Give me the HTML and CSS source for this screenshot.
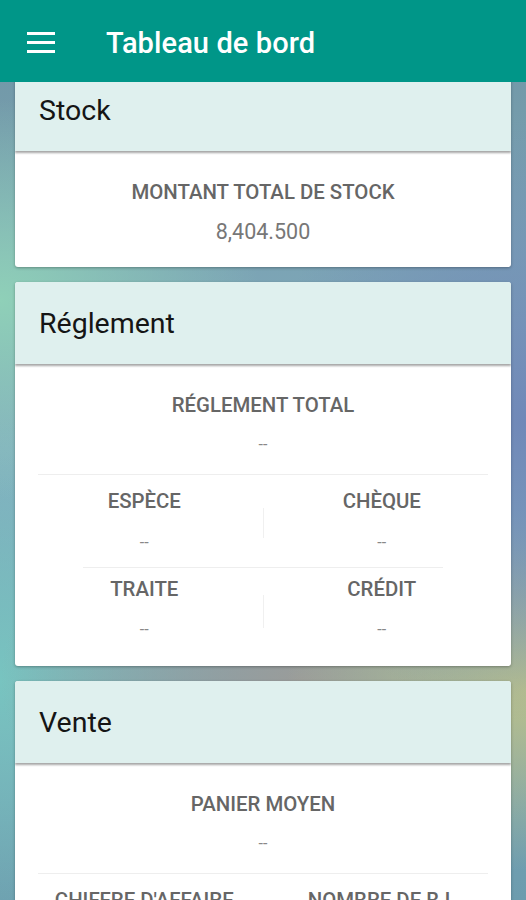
FILE: index.html
```html
<!DOCTYPE html>
<html>
<head>
  <title>Tableau de bord</title>
  <meta name="viewport" content="width=device-width, initial-scale=1.0">
  <link rel="stylesheet" href="styles.css">
</head>
<body>
  <div class="appbar">
    <svg class="menu-icon" width="28" height="22" viewBox="0 0 28 22">
      <rect x="0" y="1" width="28" height="3" fill="#fff"/>
      <rect x="0" y="10" width="28" height="3" fill="#fff"/>
      <rect x="0" y="19" width="28" height="3" fill="#fff"/>
    </svg>
    <h1 class="appbar-title">Tableau de bord</h1>
  </div>

  <div class="content">
    <div class="card">
      <div class="card-header">Stock</div>
      <div class="card-body card-body-short">
        <div class="stat-label">Montant total de stock</div>
        <div class="stat-value">8,404.500</div>
      </div>
    </div>

    <div class="card">
      <div class="card-header">Réglement</div>
      <div class="card-body">
        <div class="stat-label">Réglement total</div>
        <div class="stat-value dash">--</div>
        <div class="divider"></div>
        <div class="grid">
          <div class="cell">
            <div class="stat-label">Espèce</div>
            <div class="stat-value dash">--</div>
          </div>
          <div class="vline"></div>
          <div class="cell">
            <div class="stat-label">Chèque</div>
            <div class="stat-value dash">--</div>
          </div>
        </div>
        <div class="divider divider-inner"></div>
        <div class="grid grid-second">
          <div class="cell">
            <div class="stat-label">Traite</div>
            <div class="stat-value dash">--</div>
          </div>
          <div class="vline"></div>
          <div class="cell">
            <div class="stat-label">Crédit</div>
            <div class="stat-value dash">--</div>
          </div>
        </div>
      </div>
    </div>

    <div class="card">
      <div class="card-header">Vente</div>
      <div class="card-body">
        <div class="stat-label">Panier moyen</div>
        <div class="stat-value dash">--</div>
        <div class="divider"></div>
        <div class="grid">
          <div class="cell">
            <div class="stat-label">Chiffre d'affaire</div>
            <div class="stat-value dash">--</div>
          </div>
          <div class="vline"></div>
          <div class="cell">
            <div class="stat-label">Nombre de B.L</div>
            <div class="stat-value dash">--</div>
          </div>
        </div>
      </div>
    </div>
  </div>
</body>
</html>
```

FILE: styles.css
```css
    html, body {
      margin: 0;
      height: 100%;
      overflow: hidden;
    }
    body {
      font-family: Roboto, "Liberation Sans", sans-serif;
      background-color: #7fa8b4;
      background-image:
        radial-gradient(ellipse 260px 200px at 0px 300px, #8fd0b8 0%, rgba(143,208,184,0) 100%),
        radial-gradient(ellipse 260px 300px at 526px 420px, #7088b8 0%, rgba(112,136,184,0) 100%),
        radial-gradient(ellipse 240px 180px at 526px 690px, #b8c08c 0%, rgba(184,192,140,0) 100%),
        radial-gradient(ellipse 300px 200px at 300px 680px, #9a9c9a 0%, rgba(154,156,154,0) 100%),
        radial-gradient(ellipse 240px 260px at 0px 680px, #78c4c0 0%, rgba(120,196,192,0) 100%),
        linear-gradient(180deg, #6f95a4 0%, #84aec0 50%, #6d9cae 100%);
    }
    .appbar {
      position: fixed;
      top: 0;
      left: 0;
      right: 0;
      z-index: 10;
      height: 82px;
      background-color: #009688;
      display: flex;
      align-items: center;
      padding-left: 27px;
    }
    .menu-icon {
      display: block;
      margin-top: 1px;
    }
    .appbar-title {
      margin: 3px 0 0 51px;
      color: #fff;
      font-size: 29px;
      font-weight: 500;
      letter-spacing: 0.1px;
    }
    .content {
      padding: 69px 15px 0;
      display: flex;
      flex-direction: column;
      gap: 15px;
    }
    .card {
      background-color: #fff;
      border-radius: 3px;
      box-shadow: 0 1px 3px rgba(0, 0, 0, 0.3);
      overflow: hidden;
      flex-shrink: 0;
    }
    .card-header {
      height: 82px;
      box-sizing: border-box;
      background-color: #dff0ee;
      padding: 24px 24px 0;
      font-size: 28.5px;
      line-height: 36px;
      color: #151515;
      box-shadow: 0 2px 2px rgba(0, 0, 0, 0.35);
      position: relative;
    }
    .card-body {
      padding: 29px 0 24px;
      text-align: center;
    }
    .card-body-short {
      padding-bottom: 23px;
    }
    .stat-label {
      font-size: 20.4px;
      line-height: 24px;
      font-weight: 500;
      color: #666;
      text-transform: uppercase;
    }
    .stat-value {
      margin-top: 16px;
      font-size: 21.5px;
      line-height: 24px;
      color: #777;
    }
    .dash {
      font-size: 16px;
      color: #888;
    }
    .divider {
      height: 1px;
      background-color: #eeeeee;
      margin: 17px 23px 0;
    }
    .divider-inner {
      margin: 12px 68px 0;
    }
    .grid {
      display: grid;
      grid-template-columns: 1fr 1px 1fr;
      padding: 14px 11px 0;
    }
    .grid-second {
      padding-top: 9px;
    }
    .grid .stat-value {
      margin-top: 18px;
    }
    .grid-second .stat-value {
      margin-top: 17px;
    }
    .vline {
      background-color: #f0f0f0;
      margin: 19px 0 17px;
    }
    .grid-second .vline {
      margin: 18px 0 14px;
    }
```
